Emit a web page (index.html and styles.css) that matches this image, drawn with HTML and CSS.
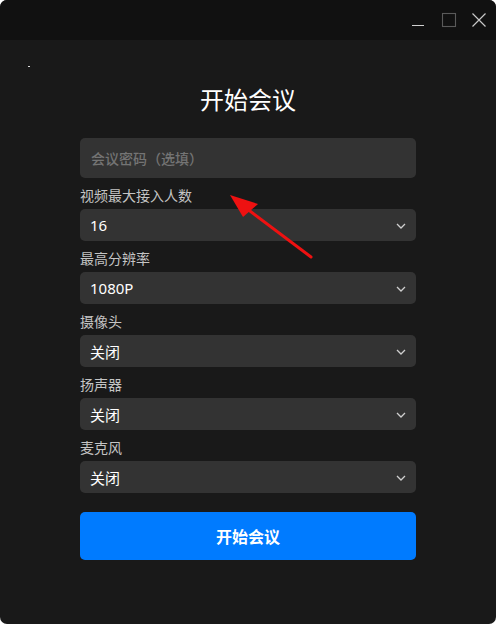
FILE: index.html
```html
<!DOCTYPE html>
<html lang="zh-CN">

<head>
  <meta charset="UTF-8" />
  <meta name="viewport" content="width=device-width, initial-scale=1.0" />
  <title>开始会议</title>
  <link rel="stylesheet" href="styles.css">
</head>

<body>
  <div class="window">
    <div class="titlebar">
      <button class="win-btn minimize" title="最小化">
        <svg width="14" height="14" viewBox="0 0 14 14"><path d="M1 12.5h12" stroke="#d0d0d0" stroke-width="1.2" /></svg>
      </button>
      <button class="win-btn maximize" title="最大化">
        <svg width="16" height="16" viewBox="0 0 16 16"><rect x="1.5" y="1.5" width="13" height="13" fill="none" stroke="#5a5a5a" stroke-width="1.1" /></svg>
      </button>
      <button class="win-btn close" title="关闭">
        <svg width="16" height="16" viewBox="0 0 16 16"><path d="M1.5 1.5l13 13M14.5 1.5l-13 13" stroke="#c8c8c8" stroke-width="1.2" /></svg>
      </button>
    </div>

    <div class="content">
      <span class="dot"></span>
      <h2>开始会议</h2>

      <form class="meeting-form">
        <input class="code-input" type="text" placeholder="会议密码（选填）" />

        <label class="field-label">视频最大接入人数</label>
        <div class="select"><span>16</span><svg class="chevron" width="10" height="6" viewBox="0 0 10 6"><path d="M1 1l4 4 4-4" fill="none" stroke="#cfcfcf" stroke-width="1.3" /></svg></div>

        <label class="field-label">最高分辨率</label>
        <div class="select"><span>1080P</span><svg class="chevron" width="10" height="6" viewBox="0 0 10 6"><path d="M1 1l4 4 4-4" fill="none" stroke="#cfcfcf" stroke-width="1.3" /></svg></div>

        <label class="field-label">摄像头</label>
        <div class="select"><span>关闭</span><svg class="chevron" width="10" height="6" viewBox="0 0 10 6"><path d="M1 1l4 4 4-4" fill="none" stroke="#cfcfcf" stroke-width="1.3" /></svg></div>

        <label class="field-label">扬声器</label>
        <div class="select"><span>关闭</span><svg class="chevron" width="10" height="6" viewBox="0 0 10 6"><path d="M1 1l4 4 4-4" fill="none" stroke="#cfcfcf" stroke-width="1.3" /></svg></div>

        <label class="field-label">麦克风</label>
        <div class="select"><span>关闭</span><svg class="chevron" width="10" height="6" viewBox="0 0 10 6"><path d="M1 1l4 4 4-4" fill="none" stroke="#cfcfcf" stroke-width="1.3" /></svg></div>

        <button class="start-button" type="button">开始会议</button>
      </form>
    </div>

    <svg class="annotation" width="496" height="624" viewBox="0 0 496 624">
      <path d="M311 257L246 208" stroke="#ee1111" stroke-width="3" stroke-linecap="round" />
      <path d="M230 195L258 204L243 217Z" fill="#ee1111" />
    </svg>
  </div>
</body>

</html>
```

FILE: styles.css
```css
* {
  margin: 0;
  padding: 0;
  box-sizing: border-box;
}

body {
  width: 496px;
  height: 624px;
  background: #ffffff;
  font-family: "Noto Sans", "Noto Sans CJK SC", sans-serif;
  color: #ffffff;
  overflow: hidden;
}

.window {
  position: relative;
  height: 624px;
  background: #191919;
  border-radius: 7px;
  overflow: hidden;
}

.titlebar {
  height: 40px;
  background: #111111;
  display: flex;
  justify-content: flex-end;
  align-items: flex-start;
  padding: 12px 9px 0 0;
  gap: 14px;
}

.win-btn {
  border: none;
  background: none;
  width: 16px;
  height: 16px;
  display: flex;
}

.minimize {
  margin-top: 1px;
}

.content {
  position: relative;
  padding: 44px 80px 0;
}

.dot {
  position: absolute;
  left: 28px;
  top: 26px;
  width: 2px;
  height: 1px;
  background: #dddddd;
}

h2 {
  text-align: center;
  font-size: 24px;
  font-weight: 400;
  line-height: 32px;
  margin-bottom: 22px;
  color: #ffffff;
}

.meeting-form {
  display: flex;
  flex-direction: column;
}

.code-input {
  height: 40px;
  border: none;
  border-radius: 5px;
  background: #333333;
  padding: 0 11px;
  font-family: inherit;
  font-size: 14px;
  color: #ffffff;
  outline: none;
}

.code-input::placeholder {
  color: #747474;
  font-weight: 500;
}

.field-label {
  font-size: 14px;
  line-height: 18px;
  color: #c4c4c4;
  margin: 9px 0 4px;
}

.select {
  height: 32px;
  border-radius: 5px;
  background: #333333;
  display: flex;
  align-items: center;
  justify-content: space-between;
  padding: 0 10px 0 10px;
  font-size: 15px;
  color: #ffffff;
}

.chevron {
  margin-top: 1px;
}

.start-button {
  margin-top: 19px;
  height: 48px;
  border: none;
  border-radius: 5px;
  background: #007bff;
  color: #ffffff;
  font-family: inherit;
  font-size: 16px;
  font-weight: 700;
  cursor: pointer;
}

.annotation {
  position: absolute;
  left: 0;
  top: 0;
  pointer-events: none;
}
```
